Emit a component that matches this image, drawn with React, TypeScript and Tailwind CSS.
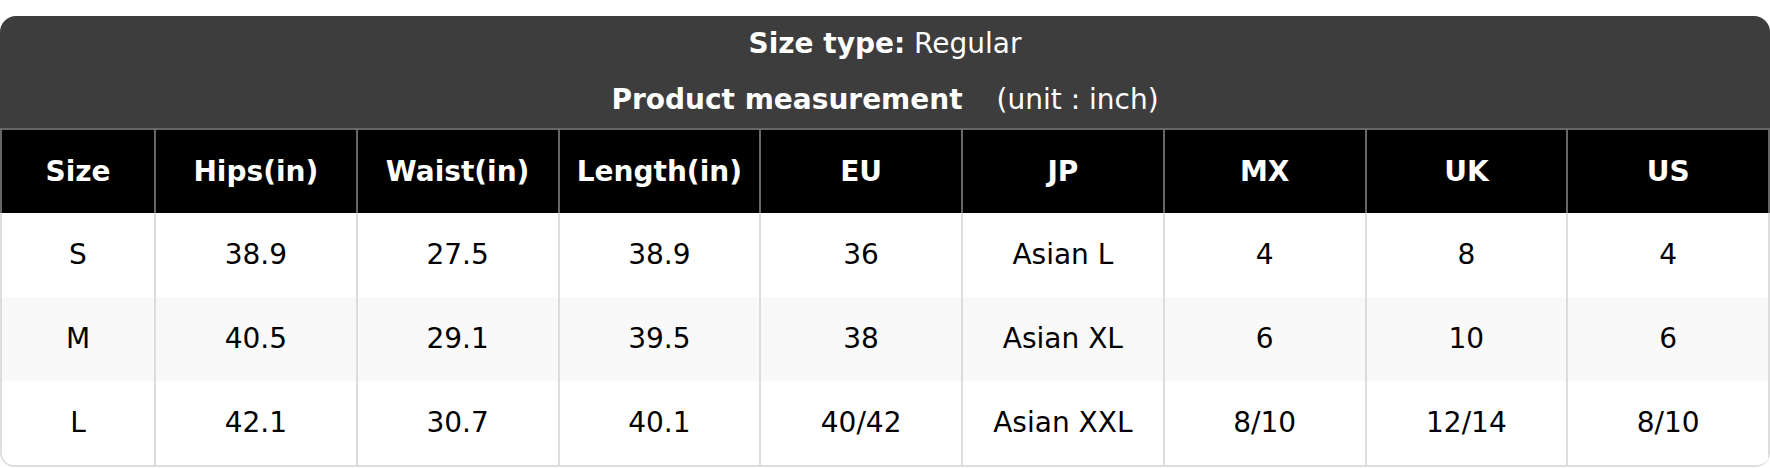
const headers = ["Size", "Hips(in)", "Waist(in)", "Length(in)", "EU", "JP", "MX", "UK", "US"];

const rows = [
  ["S", "38.9", "27.5", "38.9", "36", "Asian L", "4", "8", "4"],
  ["M", "40.5", "29.1", "39.5", "38", "Asian XL", "6", "10", "6"],
  ["L", "42.1", "30.7", "40.1", "40/42", "Asian XXL", "8/10", "12/14", "8/10"],
];

export default function App() {
  return (
    <div
      className="bg-white pt-4 text-[28px]"
      style={{ fontFamily: '"DejaVu Sans", Verdana, sans-serif' }}
    >
      <div className="rounded-t-[16px] rounded-b-[14px] overflow-hidden">
        <div className="bg-[#3d3d3d] text-white flex flex-col items-center">
          <div className="leading-[56px]">
            <span className="font-bold">Size type:</span> Regular
          </div>
          <div className="leading-[56px]">
            <span className="font-bold">Product measurement</span>
            <span className="ml-[34px]">(unit : inch)</span>
          </div>
        </div>

        <div className="grid grid-cols-[154px_repeat(8,1fr)] h-[85px] bg-black text-white font-bold border-t-2 border-l-2 border-[#666]">
          {headers.map((h) => (
            <div key={h} className="flex items-center justify-center border-r-2 border-[#666]">
              {h}
            </div>
          ))}
        </div>

        <div className="border-l-2 border-b-2 border-[#dddddd] rounded-b-[14px] overflow-hidden">
          {rows.map((r, i) => (
            <div
              key={r[0]}
              className={`grid grid-cols-[154px_repeat(8,1fr)] h-[84px] text-black ${i === 1 ? "bg-[#f9f9f9]" : "bg-white"}`}
            >
              {r.map((c, j) => (
                <div key={j} className="flex items-center justify-center border-r-2 border-[#dddddd]">
                  {c}
                </div>
              ))}
            </div>
          ))}
        </div>
      </div>
    </div>
  );
}
